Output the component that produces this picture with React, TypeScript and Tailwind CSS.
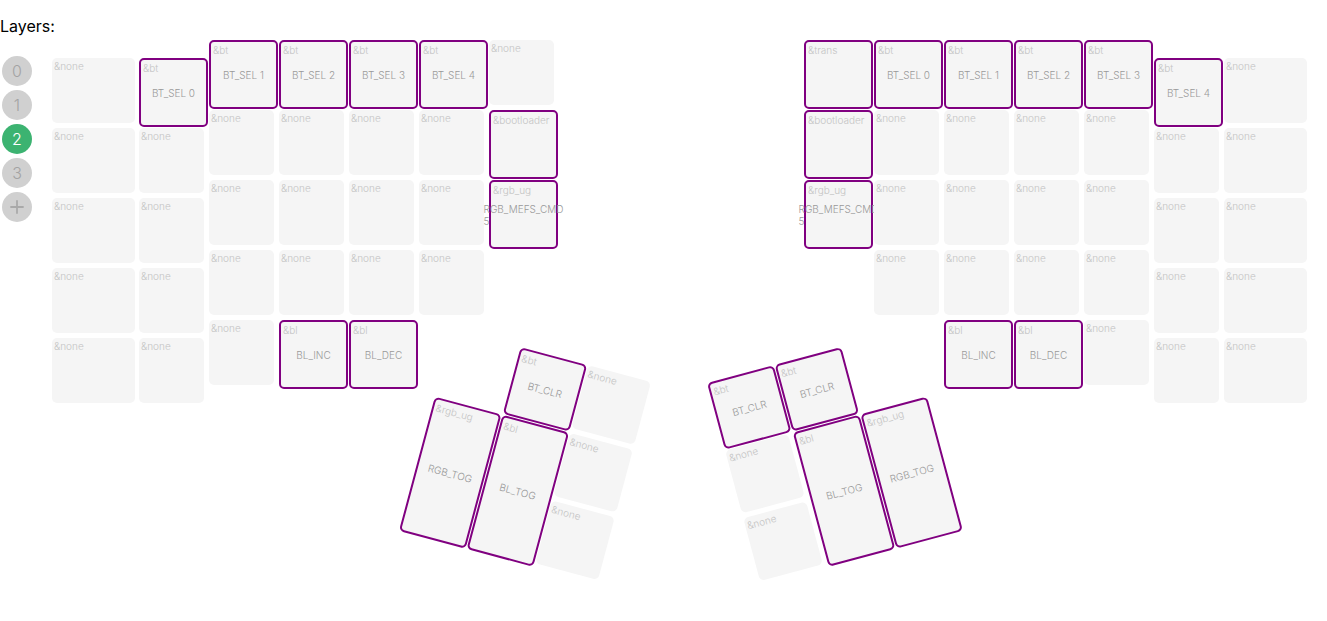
import { useState } from "react";

type Binding = { behaviour: string; param?: string };
type Column = { wide?: boolean; dropped?: boolean; keys: Binding[] };
type ThumbKey = { binding: Binding; place: string; tall?: boolean };

const key = (behaviour: string, param?: string): Binding => ({ behaviour, param });
const none = key("&none");
const nones = (count: number): Binding[] => Array.from({ length: count }, () => none);

const leftColumns: Column[] = [
  { wide: true, dropped: true, keys: nones(5) },
  { dropped: true, keys: [key("&bt", "BT_SEL 0"), ...nones(4)] },
  { keys: [key("&bt", "BT_SEL 1"), ...nones(4)] },
  { keys: [key("&bt", "BT_SEL 2"), ...nones(3), key("&bl", "BL_INC")] },
  { keys: [key("&bt", "BT_SEL 3"), ...nones(3), key("&bl", "BL_DEC")] },
  { keys: [key("&bt", "BT_SEL 4"), ...nones(3)] },
  { keys: [none, key("&bootloader"), key("&rgb_ug", "RGB_MEFS_CMD 5")] },
];

const rightColumns: Column[] = [
  { keys: [key("&trans"), key("&bootloader"), key("&rgb_ug", "RGB_MEFS_CMD 5")] },
  { keys: [key("&bt", "BT_SEL 0"), ...nones(3)] },
  { keys: [key("&bt", "BT_SEL 1"), ...nones(3), key("&bl", "BL_INC")] },
  { keys: [key("&bt", "BT_SEL 2"), ...nones(3), key("&bl", "BL_DEC")] },
  { keys: [key("&bt", "BT_SEL 3"), ...nones(4)] },
  { dropped: true, keys: [key("&bt", "BT_SEL 4"), ...nones(4)] },
  { wide: true, dropped: true, keys: nones(5) },
];

const leftThumb: ThumbKey[] = [
  { binding: none, place: "col-start-3 row-start-1" },
  { binding: none, place: "col-start-3 row-start-2" },
  { binding: none, place: "col-start-3 row-start-3" },
  { binding: key("&bt", "BT_CLR"), place: "col-start-2 row-start-1" },
  { binding: key("&rgb_ug", "RGB_TOG"), place: "col-start-1 row-start-2 row-span-2", tall: true },
  { binding: key("&bl", "BL_TOG"), place: "col-start-2 row-start-2 row-span-2", tall: true },
];

const rightThumb: ThumbKey[] = [
  { binding: none, place: "col-start-1 row-start-2" },
  { binding: none, place: "col-start-1 row-start-3" },
  { binding: key("&bt", "BT_CLR"), place: "col-start-1 row-start-1" },
  { binding: key("&bt", "BT_CLR"), place: "col-start-2 row-start-1" },
  { binding: key("&bl", "BL_TOG"), place: "col-start-2 row-start-2 row-span-2", tall: true },
  { binding: key("&rgb_ug", "RGB_TOG"), place: "col-start-3 row-start-2 row-span-2", tall: true },
];

function Key({ binding, wide, tall }: { binding: Binding; wide?: boolean; tall?: boolean }) {
  const bound = binding.behaviour !== "&none";
  const width = wide ? "w-[83px]" : bound ? "w-[69px]" : "w-[65px]";
  const height = tall ? "h-[139px]" : bound ? "h-[69px]" : "h-[65px]";
  const frame = bound ? "rounded-[5px] border-2 border-[#800080]" : "rounded-[5px]";
  return (
    <button
      type="button"
      className={`relative grid grid-cols-[minmax(0,1fr)] grid-rows-[minmax(0,1fr)] bg-[#f5f5f5] text-left text-[10px] leading-3 ${width} ${height} ${frame}`}
    >
      <span className="col-start-1 row-start-1 place-self-start px-0.5 pt-0.5 text-[#c4c4c4]">
        {binding.behaviour}
      </span>
      {binding.param && (
        <span className="col-start-1 row-start-1 place-self-center pt-px text-[#999]">{binding.param}</span>
      )}
    </button>
  );
}

function Columns({ columns }: { columns: Column[] }) {
  return (
    <div className="flex h-[368px]">
      {columns.map((column, index) => (
        <div
          key={index}
          className={`${column.wide ? "w-[87px]" : "w-[70px]"} ${column.dropped ? "pt-[18px]" : ""}`}
        >
          {column.keys.map((binding, row) => (
            <div key={row} className="h-[70px]">
              <Key binding={binding} wide={column.wide} />
            </div>
          ))}
        </div>
      ))}
    </div>
  );
}

function ThumbCluster({ keys, className }: { keys: ThumbKey[]; className: string }) {
  return (
    <div className={`grid w-[210px] origin-top-left grid-cols-3 grid-rows-[70px_70px_70px] ${className}`}>
      {keys.map(({ binding, place, tall }, index) => (
        <div key={index} className={place}>
          <Key binding={binding} tall={tall} />
        </div>
      ))}
    </div>
  );
}

export default function App() {
  const [active, setActive] = useState(2);
  return (
    <div className="flex overflow-x-clip bg-white font-['Inter','Noto_Sans',sans-serif] text-base font-light text-black">
      <nav aria-label="Layers" className="flex w-[52px] shrink-0 flex-col gap-5 pt-4">
        <p className="leading-5 font-normal">Layers:</p>
        <ul className="flex flex-col gap-1 pl-0.5">
          {[0, 1, 2, 3].map((layer) => (
            <li key={layer}>
              <button
                type="button"
                aria-pressed={layer === active}
                onClick={() => setActive(layer)}
                className={`flex size-[30px] items-center justify-center rounded-full ${
                  layer === active ? "bg-[#3cb371] text-white" : "bg-[#d0d0d0] text-[#a3a3a3]"
                }`}
              >
                {layer}
              </button>
            </li>
          ))}
          <li>
            <button
              type="button"
              aria-label="Add layer"
              className="flex size-[30px] items-center justify-center rounded-full bg-[#d0d0d0] text-[#a9a9a9]"
            >
              <svg viewBox="0 0 14 14" className="size-3.5" fill="none" stroke="currentColor" strokeWidth="1.8" strokeLinecap="round">
                <path d="M7 1v12M1 7h12" />
              </svg>
            </button>
          </li>
        </ul>
      </nav>
      <main className="flex flex-1 justify-between pt-10 pr-4">
        <section aria-label="Left half" className="w-[507px] shrink-0">
          <Columns columns={leftColumns} />
          <ThumbCluster keys={leftThumb} className="-mt-[79px] ml-[401px] rotate-15" />
        </section>
        <section aria-label="Right half" className="w-[507px] shrink-0">
          <Columns columns={rightColumns} />
          <ThumbCluster keys={rightThumb} className="-mt-[25px] -ml-[97px] -rotate-15" />
        </section>
      </main>
    </div>
  );
}
